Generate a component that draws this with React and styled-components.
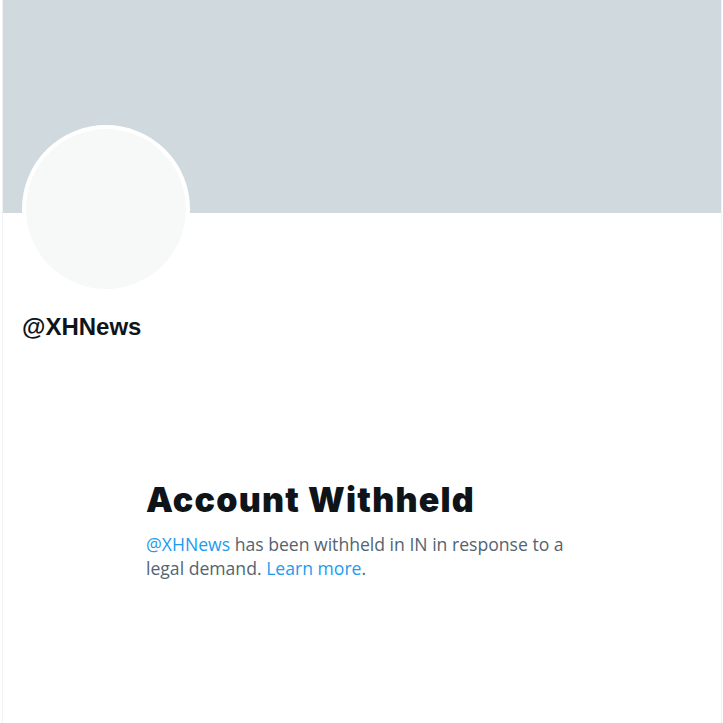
import React from 'react';
import styled, { createGlobalStyle } from 'styled-components';

// STYLES
const GlobalStyle = createGlobalStyle`
  html, body {
    margin: 0;
    padding: 0;
    background: #ffffff;
  }

  body {
    font-family: "Open Sans", "Noto Sans", sans-serif;
    color: #0f1419;
  }
`;

const Page = styled.div`
  padding-left: 2px;
  width: 720px;
  min-height: 723px;
`;

const Column = styled.main`
  display: flex;
  flex-direction: column;
  min-height: 723px;
  border-left: 1px solid #eff3f4;
  border-right: 1px solid #eff3f4;
`;

const Banner = styled.div`
  height: 213px;
  background-color: #cfd9de;
`;

const ProfileHeader = styled.div`
  display: flex;
  flex-direction: column;
  align-items: flex-start;
  padding: 0 19px;
`;

const Avatar = styled.div`
  box-sizing: border-box;
  width: 168px;
  height: 168px;
  margin-top: -88px;
  border: 4px solid #ffffff;
  border-radius: 50%;
  background-color: #f7f9f9;
`;

const Handle = styled.h2`
  margin: 20px 0 0;
  font-family: "Liberation Sans", Arial, sans-serif;
  font-size: 24px;
  font-weight: 700;
  line-height: 28px;
  color: #0f1419;
`;

const EmptyState = styled.section`
  box-sizing: border-box;
  width: 432px;
  margin: 139px auto 0;
`;

const Title = styled.h1`
  margin: 0 0 12px;
  font-family: Inter, "Liberation Sans", sans-serif;
  font-size: 34px;
  font-weight: 900;
  line-height: 40px;
  letter-spacing: 1.2px;
  color: #0f1419;
`;

const Message = styled.p`
  margin: 0;
  font-size: 17.6px;
  line-height: 24px;
  color: #536471;
`;

const Link = styled.a`
  color: #1d9bf0;
  text-decoration: none;
  cursor: pointer;
`;

// COMPONENT
const App = () => (
  <>
    <GlobalStyle />
    <Page>
      <Column>
        <Banner />

        <ProfileHeader>
          <Avatar />
          <Handle>@XHNews</Handle>
        </ProfileHeader>

        <EmptyState>
          <Title>Account Withheld</Title>
          <Message>
            <Link>@XHNews</Link> has been withheld in IN in response to a legal demand.{' '}
            <Link>Learn more</Link>.
          </Message>
        </EmptyState>
      </Column>
    </Page>
  </>
);

export default App;
